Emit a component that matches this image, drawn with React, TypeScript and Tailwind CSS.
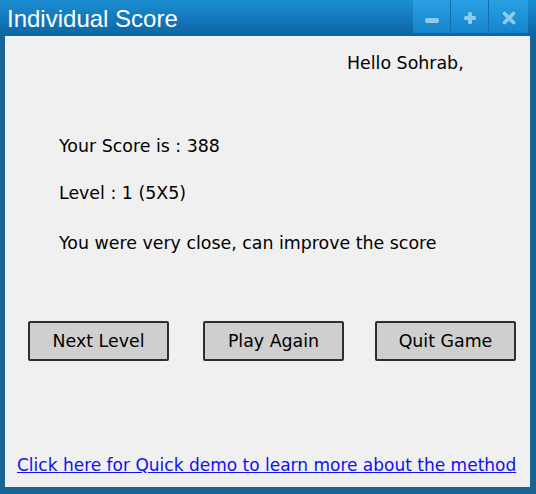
import React from "react";

const comic = { fontFamily: '"Comic Sans MS", "DejaVu Sans", sans-serif' };

function TitleButton({ children, last }: { children: React.ReactNode; last?: boolean }) {
  return (
    <div
      className={`h-[33px] flex items-center justify-center bg-gradient-to-b from-[#2aa0e4] to-[#1684cc] ${
        last ? "w-[39px]" : "w-[38px] border-r border-[#1470ad]"
      }`}
    >
      {children}
    </div>
  );
}

export default function App() {
  return (
    <div className="w-[536px] h-[494px] bg-[#1a6494] flex flex-col overflow-hidden">
      <div className="h-[36px] flex items-start bg-gradient-to-b from-[#1d8ed2] via-[#1479bd] to-[#0d64a0]">
        <div
          className="pl-[7px] pt-[5px] text-white text-[24px] leading-[27px] flex-1"
          style={{ fontFamily: '"Liberation Sans", Arial, sans-serif' }}
        >
          Individual Score
        </div>
        <div className="flex mr-[8px]">
          <TitleButton>
            <div className="w-[14px] h-[5px] rounded-[2px] bg-[#8ecbec] mt-[7px]" />
          </TitleButton>
          <TitleButton>
            <svg width="14" height="14" viewBox="0 0 14 14" className="mt-[2px]">
              <rect x="5" y="1" width="4" height="12" rx="1.5" fill="#8ecbec" />
              <rect x="1" y="5" width="12" height="4" rx="1.5" fill="#8ecbec" />
            </svg>
          </TitleButton>
          <TitleButton last>
            <svg width="14" height="14" viewBox="0 0 14 14" className="mt-[2px]">
              <path d="M2.5 2.5 L11.5 11.5 M11.5 2.5 L2.5 11.5" stroke="#8ecbec" strokeWidth="3.6" strokeLinecap="round" />
            </svg>
          </TitleButton>
        </div>
      </div>
      <div className="ml-[5px] mr-[6px] mb-[7px] flex-1 bg-[#f0f0f0] flex flex-col text-[17.4px] text-black" style={comic}>
        <div className="pt-[14px] pl-[342px] leading-[26px]">Hello Sohrab,</div>
        <div className="pl-[54px] mt-[57px] leading-[26px]">Your Score is : 388</div>
        <div className="pl-[54px] mt-[21px] leading-[26px]">Level : 1 (5X5)</div>
        <div className="pl-[54px] mt-[24px] leading-[26px]">You were very close, can improve the score</div>
        <div className="flex mt-[65px] pl-[23px]">
          <div className="w-[141px] h-[40px] flex items-center justify-center bg-[#cfcfcf] border-2 border-[#2e2e2e] rounded-[2px]">
            Next Level
          </div>
          <div className="w-[141px] h-[40px] ml-[34px] flex items-center justify-center bg-[#cfcfcf] border-2 border-[#2e2e2e] rounded-[2px]">
            Play Again
          </div>
          <div className="w-[141px] h-[40px] ml-[31px] flex items-center justify-center bg-[#cfcfcf] border-2 border-[#2e2e2e] rounded-[2px]">
            Quit Game
          </div>
        </div>
        <div className="mt-[91px] pl-[12px] leading-[26px] text-[17px]">
          <span className="text-[#1010f0] underline">Click here for Quick demo to learn more about the method</span>
        </div>
      </div>
    </div>
  );
}
